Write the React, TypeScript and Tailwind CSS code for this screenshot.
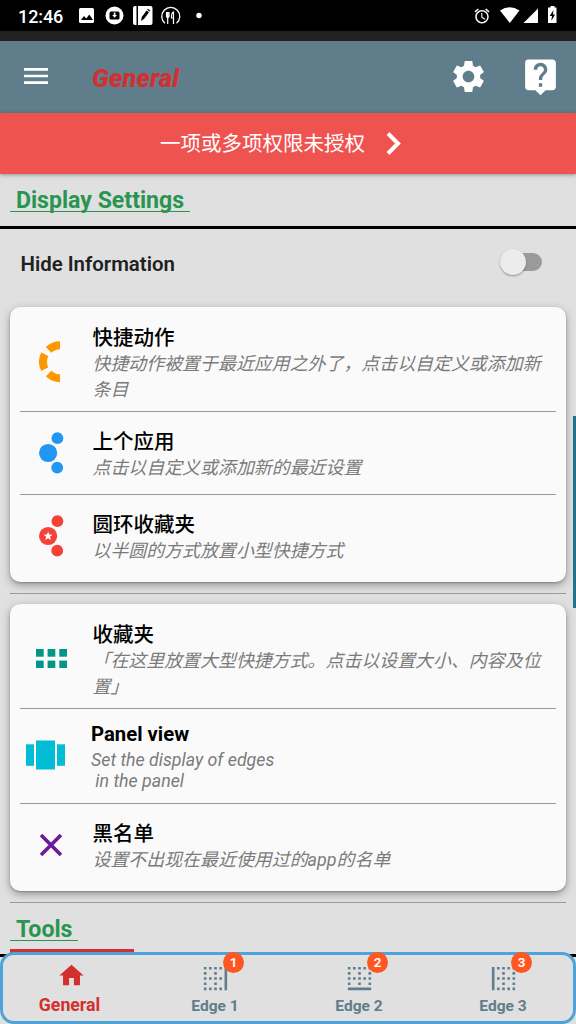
import type { ReactNode } from "react";
import {
  MdAlarm,
  MdBorderBottom,
  MdBorderLeft,
  MdBorderRight,
  MdHome,
  MdLiveHelp,
  MdMenu,
  MdSettings,
} from "react-icons/md";

function StatusBar() {
  return (
    <div className="flex h-[31px] shrink-0 items-center bg-black text-white">
      <span className="ml-[18px] w-[61px] pt-[1px] text-[18px] leading-[29px] font-medium tracking-[-0.1px]">12:46</span>
      <svg width="124" height="31" viewBox="79 0 124 31" fill="#fff">
        <rect x="79" y="8" width="15" height="15" rx="1.5" />
        <path d="M81 20l3-4 2.3 2.5 3-4 3.7 5.5z" fill="#000" />
        <circle cx="114.500" cy="15.500" r="9" />
        <rect x="109.500" y="11.500" width="10" height="8" rx="1.500" fill="#000" />
        <path d="M113.800 12.500h1.600v2.500h1.600l-2.400 2.800-2.400-2.800h1.600z" />
        <path d="M135 6h1.500v19H135a2 2 0 0 1-2-2V8a2 2 0 0 1 2-2zM138 6h12.500a2 2 0 0 1 2 2v15a2 2 0 0 1-2 2H138z" />
        <path d="M141 21l.8-4 4.800-6.500 2.400 1.700-4.800 6.600zM147.200 9.700l.7-.9 2.300 1.600-.7 1z" fill="#000" />
        <path d="M165 23.300a9 9 0 1 1 11.500 0" fill="none" stroke="#fff" strokeWidth="1.300" />
        <path d="M166.500 12v4.300q0 1 1.200 1.300V24M169 12v4.300q0 1-1.200 1.300M167.700 12v5M173.500 24V12q-2.300 1-2 6h2" fill="none" stroke="#fff" strokeWidth="1.200" />
        <circle cx="199" cy="15.500" r="2.700" />
      </svg>
      <MdAlarm className="ml-[270px] size-[18px]" />
      <svg className="ml-[9px]" width="58" height="31" viewBox="500 0 58 31" fill="#fff">
        <path d="M500 10.500Q509.500 4 519.500 10.500L509.800 23z" />
        <path d="M538 8.500V23h-14.500z" />
        <path d="M550.500 6h4v1.500h2V23h-8.500V7.500h2.500z" />
        <path d="M553.500 10l-3.800 6h2.300l-.7 5 3.800-6.500h-2.200z" fill="#000" />
      </svg>
    </div>
  );
}

function Header() {
  return (
    <header className="flex h-[72px] shrink-0 items-center bg-[#607d8b] pb-[1px] text-white">
      <MdMenu className="mb-[1px] ml-5 size-8" />
      <h1 className="ml-[40px] w-[101px] pt-[2px] text-[25.7px] leading-8 font-extrabold text-[#d32f2f] italic">
        General
      </h1>
      <MdSettings className="ml-[256px] size-[39px]" />
      <MdLiveHelp className="ml-[32px] size-[41px]" />
    </header>
  );
}

function SectionTitle({ children }: { children: string }) {
  return (
    <h2 className="flex pl-[10px] text-[23.1px] font-bold text-[#2a9550]">
      <span className="relative px-[6px] leading-[30px]">
        {children}
        <span className="absolute inset-x-0 bottom-[4px] h-px bg-[#2a9550]" />
      </span>
    </h2>
  );
}

type RowProps = {
  icon: ReactNode;
  title: string;
  lines: string[];
  className: string;
  latin?: boolean;
};

function Row({ icon, title, lines, className, latin = false }: RowProps) {
  return (
    <div className={`flex ${className}`}>
      <div className="w-[82.500px] shrink-0">{icon}</div>
      <div className={latin ? "-ml-[1.500px]" : "pt-px"}>
        <h3
          className={
            latin
              ? "pb-[2px] text-[20.3px] leading-[26px] font-bold text-black"
              : "-mb-px pb-px text-[20.5px] leading-[26px] font-medium text-black"
          }
        >
          {title}
        </h3>
        <div className={latin ? "" : "-mt-px"}>
          {lines.map((line) => (
            <p
              key={line}
              className={
                latin
                  ? "text-[17.8px] leading-[21px] whitespace-pre text-[#7b7b7b] italic"
                  : "text-[17.93px] leading-[26px] whitespace-nowrap text-[#7b7b7b] italic"
              }
            >
              {line}
            </p>
          ))}
        </div>
      </div>
    </div>
  );
}

function Rule() {
  return <div className="mx-[10px] h-px shrink-0 bg-[#999]" />;
}

function Card({ children, className }: { children: ReactNode; className: string }) {
  return (
    <section
      className={`mx-[10px] flex shrink-0 flex-col rounded-[10px] bg-[#fafafa] shadow-[0_3px_9px_rgba(0,0,0,0.34),0_1px_2px_rgba(0,0,0,0.2)] ${className}`}
    >
      {children}
    </section>
  );
}

function ArcIcon() {
  return (
    <svg className="mt-[17px] ml-[29px]" width="22" height="42" viewBox="0 0 22 42">
      <g fill="none" stroke="#ff9800" strokeWidth="8">
        <path d="M21 4.300A16.500 16.500 0 0 0 9.600 8.900" />
        <path d="M5.800 13.300A16.500 16.500 0 0 0 5.800 28.100" />
        <path d="M9.600 32.500A16.500 16.500 0 0 0 21 37.300" />
      </g>
    </svg>
  );
}

function DotsIcon({ color, star = false }: { color: string; star?: boolean }) {
  return (
    <svg className="mt-[4px] ml-[29px]" width="25" height="42" viewBox="0 0 25 42" fill={color}>
      <circle cx="18.400" cy="6.200" r="5.900" />
      <circle cx="9.100" cy="21" r="9.100" />
      <circle cx="18.200" cy="35.700" r="5.900" />
      {star && (
        <path
          d="M9.100 16.500l1.150 3.100 3.350.15-2.600 2.050.9 3.200-2.800-1.850L6.300 25l.9-3.200-2.600-2.050 3.350-.15z"
          fill="#fff"
        />
      )}
    </svg>
  );
}

function GridIcon() {
  return (
    <svg className="mt-[28px] ml-[26px]" width="31" height="19" viewBox="0 0 31 19" fill="#009688">
      {[0, 11.6, 23.3].map((x) => (
        <g key={x}>
          <rect x={x} y="0" width="7.700" height="7.700" />
          <rect x={x} y="11.600" width="7.700" height="7.400" />
        </g>
      ))}
    </svg>
  );
}

function CarouselIcon() {
  return (
    <svg className="mt-[19px] ml-4" width="39" height="30" viewBox="0 0 39 30" fill="#00bcd4">
      <rect x="0" y="4.300" width="8" height="21.500" />
      <rect x="10" y="0.500" width="19" height="29" />
      <rect x="31" y="4.300" width="8" height="21.500" />
    </svg>
  );
}

function CrossIcon() {
  return (
    <svg className="mt-[14px] ml-[30px]" width="22" height="22" viewBox="0 0 22 22">
      <path d="M1 1L21 21M21 1L1 21" stroke="#6a1b9a" strokeWidth="3.600" />
    </svg>
  );
}

function NavItem({ icon, label, badge }: { icon: ReactNode; label: string; badge: string }) {
  return (
    <div className="relative flex w-36 shrink-0 flex-col items-center pt-[8px] text-[#607d8b]">
      {icon}
      <span className="text-[15.5px] leading-5 font-bold">{label}</span>
      <span className="absolute top-[-3px] left-[80px] flex size-[21px] items-center justify-center rounded-full bg-[#ff5722] text-[13.5px] font-semibold text-white">
        {badge}
      </span>
    </div>
  );
}

export default function App() {
  return (
    <div className="relative flex h-[1024px] w-[576px] flex-col overflow-hidden bg-[#e0e0e0] font-[Roboto,'Noto_Sans_CJK_SC',sans-serif]">
      <StatusBar />
      <div className="h-[10px] shrink-0 bg-[#212121]" />
      <Header />
      <div className="z-10 flex h-[61px] shrink-0 items-center bg-[#ef5350] pl-[160px] text-white shadow-[0_1px_4px_rgba(0,0,0,0.35)]">
        <span className="pt-px text-[20.5px] leading-[30px]">一项或多项权限未授权</span>
        <svg className="ml-[21px]" width="16" height="24" viewBox="0 0 16 24">
          <path d="M2 1.500l10 10L2 21.500" fill="none" stroke="#fff" strokeWidth="4" />
        </svg>
      </div>
      <div className="h-[52px] shrink-0 pt-[12px]">
        <SectionTitle>Display Settings</SectionTitle>
      </div>
      <div className="h-[2.5px] shrink-0 bg-black" />
      <div className="flex h-[78.5px] shrink-0 items-start justify-between pt-[22px] pr-[34px] pl-[20.500px]">
        <span className="text-[20.4px] leading-[26px] font-semibold text-[#212121]">Hide Information</span>
        <div className="mt-[-2px] flex h-[26px] w-[42px] items-center">
          <div className="flex h-[18px] w-[42px] items-center rounded-full bg-linear-to-r from-transparent from-50% to-[#9b9b9b] to-50%">
            <div className="size-[26px] shrink-0 rounded-full bg-[#ececec] shadow-[0_1px_2px_rgba(0,0,0,0.35)]" />
          </div>
        </div>
      </div>
      <Card className="h-[275px]">
        <Row
          className="h-[104px] pt-[17px]"
          icon={<ArcIcon />}
          title="快捷动作"
          lines={["快捷动作被置于最近应用之外了，点击以自定义或添加新", "条目"]}
        />
        <Rule />
        <Row
          className="h-[82px] pt-[16px]"
          icon={<DotsIcon color="#2196f3" />}
          title="上个应用"
          lines={["点击以自定义或添加新的最近设置"]}
        />
        <Rule />
        <Row
          className="h-[87px] pt-[16px]"
          icon={<DotsIcon color="#f44336" star />}
          title="圆环收藏夹"
          lines={["以半圆的方式放置小型快捷方式"]}
        />
      </Card>
      <div className="h-[11px] shrink-0" />
      <Rule />
      <div className="h-[10px] shrink-0" />
      <Card className="h-[287px]">
        <Row
          className="h-[104px] pt-[17px]"
          icon={<GridIcon />}
          title="收藏夹"
          lines={["「在这里放置大型快捷方式。点击以设置大小、内容及位", "置」"]}
        />
        <Rule />
        <Row
          className="h-[94px] pt-[12px]"
          icon={<CarouselIcon />}
          title="Panel view"
          lines={["Set the display of edges", " in the panel"]}
          latin
        />
        <Rule />
        <Row
          className="h-[87px] pt-[16px]"
          icon={<CrossIcon />}
          title="黑名单"
          lines={["设置不出现在最近使用过的app的名单"]}
        />
      </Card>
      <div className="h-[11px] shrink-0" />
      <Rule />
      <div className="h-[45.5px] shrink-0 pt-[12px]">
        <SectionTitle>Tools</SectionTitle>
      </div>
      <div className="ml-[10px] h-[5.500px] w-[124px] shrink-0 bg-[#d32f2f]" />
      <div className="h-[2.5px] shrink-0 bg-black" />
      <nav className="relative z-10 -mt-[4.500px] flex h-[72px] shrink-0 rounded-[14px] border-[3px] border-[#4ea3d8] bg-[#e0e0e0]">
        <div className="flex w-[140px] shrink-0 flex-col items-center pt-[6px] text-[#d32f2f]">
          <MdHome className="mr-[3px] size-[29px]" />
          <span className="mt-[5px] mr-[7px] text-[17.7px] leading-5 font-bold">General</span>
        </div>
        <NavItem icon={<MdBorderRight className="mb-[2px] size-[31px]" />} label="Edge 1" badge="1" />
        <NavItem icon={<MdBorderBottom className="mb-[2px] size-[31px]" />} label="Edge 2" badge="2" />
        <NavItem icon={<MdBorderLeft className="mb-[2px] size-[31px]" />} label="Edge 3" badge="3" />
      </nav>
      <div className="absolute top-[416px] right-0 h-[192px] w-[3px] bg-[#21718f]" />
    </div>
  );
}
